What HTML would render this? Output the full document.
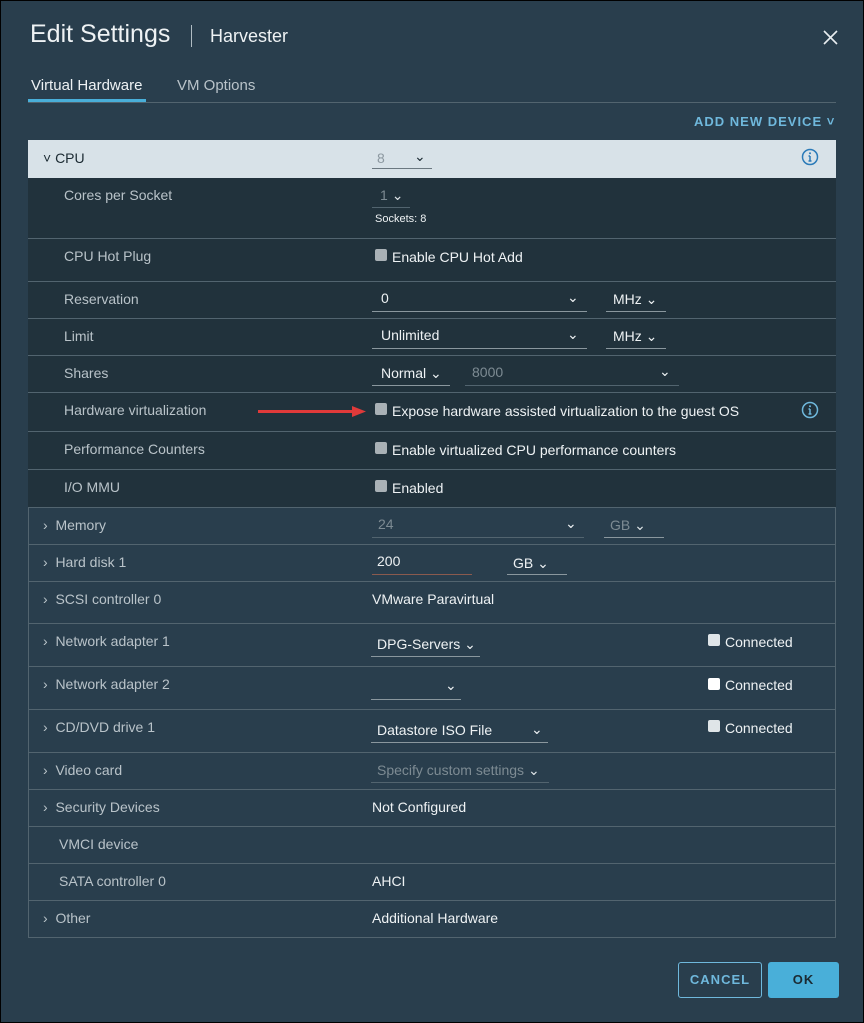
<!DOCTYPE html><html><head><meta charset="utf-8"><style>
*{box-sizing:border-box;margin:0;padding:0}
body{width:864px;height:1023px;background:#293e4d;font-family:"Liberation Sans",sans-serif;position:relative;overflow:hidden;color:#e8edf0}
.a{position:absolute;white-space:nowrap}
.row{position:absolute;left:28px;width:808px;border-bottom:1px solid #52646f}
.dk{background:#21323c}
.lb{font-size:14px;color:#b9c3c9}
.v{font-size:14px;color:#eef2f4}
.g{color:#7d8b93}
.ul{position:absolute;height:1px;background:#8a979e}
.cb{position:absolute;width:12px;height:12px;background:#a9b1b6;border-radius:2px}
</style></head><body>
<div class="a" style="left:0;top:0;width:864px;height:1023px;border:1px solid #000"></div>
<div class="a" style="left:30px;top:20px;font-size:25px;color:#eef2f4">Edit Settings</div>
<div class="a" style="left:191px;top:25px;width:1px;height:22px;background:#b0bcc3"></div>
<div class="a" style="left:210px;top:26px;font-size:18px;color:#eef2f4">Harvester</div>
<svg class="a" style="left:823px;top:30px" width="15" height="15"><path d="M1 1L14 14M14 1L1 14" stroke="#e8edf0" stroke-width="1.6"/></svg>
<div class="a" style="left:31px;top:77px;font-size:15px;color:#eef2f4">Virtual Hardware</div>
<div class="a" style="left:177px;top:77px;font-size:15px;color:#b9c3c9">VM Options</div>
<div class="a" style="left:28px;top:102px;width:808px;height:1px;background:#52646f"></div>
<div class="a" style="left:28px;top:99px;width:118px;height:3px;background:#49afd9"></div>
<div class="a" style="left:694px;top:114px;font-size:13px;font-weight:bold;letter-spacing:1px;color:#6fb8dc">ADD NEW DEVICE ˅</div>
<div class="a" style="left:28px;top:140px;width:808px;height:798px;border:1px solid #52646f"></div>
<div class="row" style="top:140px;height:38px;background:#d8e2e8;border:none"></div>
<div class="a" style="left:43px;top:150px;font-size:14px;color:#1b2a32">˅ CPU</div>
<div class="a" style="left:377px;top:150px;font-size:14px;color:#8c98a0">8</div>
<div class="a" style="left:414px;top:148px;font-size:14px;color:#1b2a32">⌄</div>
<div class="ul" style="left:372px;top:168px;width:60px;background:#6b7880"></div>
<svg class="a" style="left:801px;top:148px" width="18" height="18"><circle cx="9" cy="9" r="7.5" fill="none" stroke="#2a7ab8" stroke-width="1.5"/><path d="M9 8v5M7.5 13h3M7.5 8h1.5" stroke="#2a7ab8" stroke-width="1.5"/><circle cx="9" cy="5.3" r="1" fill="#2a7ab8"/></svg>
<div class="row dk" style="top:178px;height:61px"></div>
<div class="row dk" style="top:239px;height:43px"></div>
<div class="row dk" style="top:282px;height:37px"></div>
<div class="row dk" style="top:319px;height:37px"></div>
<div class="row dk" style="top:356px;height:37px"></div>
<div class="row dk" style="top:393px;height:39px"></div>
<div class="row dk" style="top:432px;height:38px"></div>
<div class="row dk" style="top:470px;height:38px"></div>
<div class="row" style="top:508px;height:37px"></div>
<div class="row" style="top:545px;height:37px"></div>
<div class="row" style="top:582px;height:42px"></div>
<div class="row" style="top:624px;height:43px"></div>
<div class="row" style="top:667px;height:43px"></div>
<div class="row" style="top:710px;height:43px"></div>
<div class="row" style="top:753px;height:37px"></div>
<div class="row" style="top:790px;height:37px"></div>
<div class="row" style="top:827px;height:37px"></div>
<div class="row" style="top:864px;height:37px"></div>
<div class="a lb" style="left:64px;top:187px">Cores per Socket</div>
<div class="a v g" style="left:380px;top:187px">1 <span style="color:#dfe5e8">⌄</span></div>
<div class="ul" style="left:372px;top:207px;width:38px;background:#52646f"></div>
<div class="a" style="left:375px;top:213px;font-size:11px;color:#eef2f4">Sockets: 8</div>
<div class="a lb" style="left:64px;top:248px">CPU Hot Plug</div>
<div class="cb" style="left:375px;top:249px"></div><div class="a v" style="left:392px;top:249px">Enable CPU Hot Add</div>
<div class="a lb" style="left:64px;top:291px">Reservation</div>
<div class="a v" style="left:381px;top:290px">0</div><div class="a v" style="left:567px;top:289px">⌄</div>
<div class="ul" style="left:372px;top:311px;width:215px"></div>
<div class="a v" style="left:613px;top:291px">MHz ⌄</div><div class="ul" style="left:606px;top:311px;width:60px"></div>
<div class="a lb" style="left:64px;top:328px">Limit</div>
<div class="a v" style="left:381px;top:327px">Unlimited</div><div class="a v" style="left:567px;top:326px">⌄</div>
<div class="ul" style="left:372px;top:348px;width:215px"></div>
<div class="a v" style="left:613px;top:328px">MHz ⌄</div><div class="ul" style="left:606px;top:348px;width:60px"></div>
<div class="a lb" style="left:64px;top:365px">Shares</div>
<div class="a v" style="left:381px;top:365px">Normal ⌄</div><div class="ul" style="left:372px;top:385px;width:78px"></div>
<div class="a v g" style="left:472px;top:364px">8000</div><div class="a v" style="left:659px;top:363px">⌄</div><div class="ul" style="left:465px;top:385px;width:214px;background:#52646f"></div>
<div class="a lb" style="left:64px;top:402px">Hardware virtualization</div>
<div class="a" style="left:258px;top:410px;width:100px;height:3px;background:#e03a3a"></div>
<svg class="a" style="left:352px;top:404px" width="14" height="15"><path d="M0 2L14 7.5L0 13Z" fill="#e03a3a"/></svg>
<div class="cb" style="left:375px;top:403px"></div><div class="a v" style="left:392px;top:403px">Expose hardware assisted virtualization to the guest OS</div>
<svg class="a" style="left:801px;top:401px" width="18" height="18"><circle cx="9" cy="9" r="7.5" fill="none" stroke="#6fb8dc" stroke-width="1.5"/><path d="M9 8v5M7.5 13h3M7.5 8h1.5" stroke="#6fb8dc" stroke-width="1.5"/><circle cx="9" cy="5.3" r="1" fill="#6fb8dc"/></svg>
<div class="a lb" style="left:64px;top:441px">Performance Counters</div>
<div class="cb" style="left:375px;top:442px"></div><div class="a v" style="left:392px;top:442px">Enable virtualized CPU performance counters</div>
<div class="a lb" style="left:64px;top:479px">I/O MMU</div>
<div class="cb" style="left:375px;top:480px"></div><div class="a v" style="left:392px;top:480px">Enabled</div>
<div class="a lb" style="left:43px;top:517px">›&nbsp; Memory</div>
<div class="a v g" style="left:378px;top:516px">24</div><div class="a v" style="left:565px;top:515px">⌄</div><div class="ul" style="left:372px;top:537px;width:212px;background:#52646f"></div>
<div class="a v g" style="left:610px;top:517px">GB <span style="color:#dfe5e8">⌄</span></div><div class="ul" style="left:604px;top:537px;width:60px"></div>
<div class="a lb" style="left:43px;top:554px">›&nbsp; Hard disk 1</div>
<div class="a v" style="left:377px;top:553px">200</div><div class="ul" style="left:372px;top:574px;width:100px;background:#8a5a4e"></div>
<div class="a v" style="left:513px;top:555px">GB ⌄</div><div class="ul" style="left:507px;top:574px;width:60px"></div>
<div class="a lb" style="left:43px;top:591px">›&nbsp; SCSI controller 0</div>
<div class="a v" style="left:372px;top:591px">VMware Paravirtual</div>
<div class="a lb" style="left:43px;top:633px">›&nbsp; Network adapter 1</div>
<div class="a v" style="left:377px;top:636px">DPG-Servers ⌄</div><div class="ul" style="left:371px;top:656px;width:109px"></div>
<div class="cb" style="left:708px;top:634px;background:#dfe5e8"></div><div class="a v" style="left:725px;top:634px">Connected</div>
<div class="a lb" style="left:43px;top:676px">›&nbsp; Network adapter 2</div>
<div class="a v" style="left:445px;top:677px">⌄</div><div class="ul" style="left:371px;top:699px;width:90px"></div>
<div class="cb" style="left:708px;top:678px;background:#fff"></div><div class="a v" style="left:725px;top:677px">Connected</div>
<div class="a lb" style="left:43px;top:719px">›&nbsp; CD/DVD drive 1</div>
<div class="a v" style="left:377px;top:722px">Datastore ISO File</div><div class="a v" style="left:531px;top:721px">⌄</div><div class="ul" style="left:371px;top:742px;width:177px"></div>
<div class="cb" style="left:708px;top:720px;background:#dfe5e8"></div><div class="a v" style="left:725px;top:720px">Connected</div>
<div class="a lb" style="left:43px;top:762px">›&nbsp; Video card</div>
<div class="a v g" style="left:377px;top:762px">Specify custom settings <span style="color:#dfe5e8">⌄</span></div><div class="ul" style="left:371px;top:782px;width:178px;background:#52646f"></div>
<div class="a lb" style="left:43px;top:799px">›&nbsp; Security Devices</div>
<div class="a v" style="left:372px;top:799px">Not Configured</div>
<div class="a lb" style="left:59px;top:836px">VMCI device</div>
<div class="a lb" style="left:59px;top:873px">SATA controller 0</div>
<div class="a v" style="left:372px;top:873px">AHCI</div>
<div class="a lb" style="left:43px;top:910px">›&nbsp; Other</div>
<div class="a v" style="left:372px;top:910px">Additional Hardware</div>
<div class="a" style="left:678px;top:962px;width:84px;height:36px;border:1px solid #6fb8dc;border-radius:3px;color:#6fb8dc;font-size:13px;font-weight:bold;letter-spacing:1px;text-align:center;line-height:34px">CANCEL</div>
<div class="a" style="left:768px;top:962px;width:71px;height:36px;background:#49afd9;border-radius:3px;color:#1b2a32;font-size:13px;font-weight:bold;letter-spacing:1px;text-align:center;line-height:36px">OK</div>
</body></html>
